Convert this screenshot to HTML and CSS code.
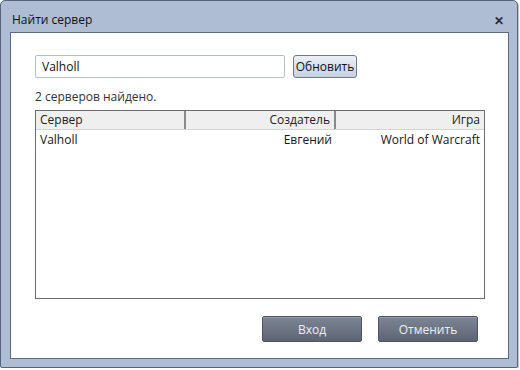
FILE: index.html
```html
<!DOCTYPE html>
<html lang="ru">
<head>
    <meta charset="UTF-8">
    <title>Найти сервер</title>
    <link rel="stylesheet" href="styles.css">
</head>
<body>
    <div class="window">
        <div class="titlebar">
            <span class="title">Найти сервер</span>
            <span class="close">&#x2715;</span>
        </div>
        <div class="client">
            <div class="search-row">
                <div class="field">Valholl</div>
                <button class="refresh">Обновить</button>
            </div>
            <div class="found">2 серверов найдено.</div>
            <div class="list">
                <div class="list-head">
                    <div class="col col-server">Сервер</div>
                    <div class="col col-owner">Создатель</div>
                    <div class="col col-game">Игра</div>
                </div>
                <div class="list-row">
                    <div class="cell col-server">Valholl</div>
                    <div class="cell col-owner">Евгений</div>
                    <div class="cell col-game">World of Warcraft</div>
                </div>
            </div>
            <div class="actions">
                <button class="dark-btn">Вход</button>
                <button class="dark-btn">Отменить</button>
            </div>
        </div>
    </div>
</body>
</html>
```

FILE: styles.css
```css
body {
    margin: 0;
    background: #ffffff;
    font-family: "Open Sans", "Noto Sans", Arial, sans-serif;
    font-size: 12px;
    color: #1a1a1a;
}

.window {
    width: 518px;
    height: 368px;
    box-sizing: border-box;
    background: #aebdd4;
    border: 1px solid #55657d;
    border-radius: 5px 5px 2px 2px;
    padding: 0 8px 8px 9px;
    display: flex;
    flex-direction: column;
    box-shadow: 1px 1px 1px rgba(0, 0, 0, 0.25);
}

.titlebar {
    height: 31px;
    display: flex;
    align-items: center;
    justify-content: space-between;
    padding: 0 4px 0 2px;
}

.title {
    font-size: 12px;
    color: #101010;
    margin-top: 5px;
}

.close {
    font-size: 12px;
    font-weight: bold;
    color: #2b2b2b;
    margin-top: 8px;
    margin-right: 1px;
}

.client {
    flex: 1;
    background: #ffffff;
    border: 1px solid #5b6a82;
    padding: 22px 24px 0 24px;
    display: flex;
    flex-direction: column;
}

.search-row {
    display: flex;
    align-items: center;
    gap: 8px;
}

.field {
    width: 250px;
    height: 23px;
    box-sizing: border-box;
    border: 1px solid #b8bcc4;
    border-radius: 2px;
    padding: 0 6px;
    line-height: 21px;
    font-size: 12px;
    color: #111;
}

.refresh {
    height: 23px;
    width: 64px;
    padding: 0;
    font-family: inherit;
    font-size: 12px;
    color: #111;
    border: 1px solid #707a88;
    border-radius: 3px;
    background: linear-gradient(to bottom, #eaf0f8, #c6d2e2);
}

.found {
    margin-top: 10px;
    height: 18px;
    line-height: 18px;
    color: #333;
}

.list {
    margin-top: 4px;
    width: 450px;
    height: 189px;
    box-sizing: border-box;
    border: 1px solid #6c6c6c;
}

.list-head {
    display: flex;
    height: 18px;
    background: #efefef;
    border-bottom: 1px solid #d4d4d4;
}

.col {
    box-sizing: border-box;
    line-height: 18px;
    padding: 0 4px;
    color: #222;
    border-right: 2px solid #8a8a8a;
}

.col-server {
    width: 150px;
}

.col-owner {
    width: 150px;
    text-align: right;
}

.col-game {
    flex: 1;
    text-align: right;
    border-right: none;
}

.list-row {
    display: flex;
    height: 20px;
}

.cell {
    box-sizing: border-box;
    line-height: 20px;
    padding: 0 4px;
    color: #151515;
}

.actions {
    margin-top: 17px;
    display: flex;
    justify-content: flex-end;
    gap: 16px;
    padding-right: 6px;
}

.dark-btn {
    width: 100px;
    height: 26px;
    padding: 0;
    font-family: inherit;
    font-size: 12px;
    color: #eef0f4;
    border: 1px solid #4d5565;
    border-radius: 2px;
    background: linear-gradient(to bottom, #7c8594, #5d6575);
    box-shadow: inset 0 1px 0 rgba(255, 255, 255, 0.2);
}
```
